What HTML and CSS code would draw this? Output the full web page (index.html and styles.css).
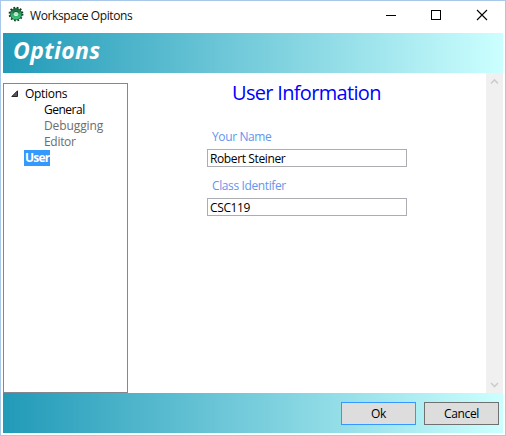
FILE: index.html
```html
<!DOCTYPE html>
<html lang="en">
<head>
<meta charset="utf-8">
<title>Workspace Opitons</title>
<link rel="stylesheet" href="styles.css">
</head>
<body>
<div class="window">
  <div class="titlebar">
    <svg class="gear" width="16" height="16" viewBox="0 0 16 16">
      <defs><linearGradient id="g" x1="0" y1="0" x2="0" y2="1"><stop offset="0" stop-color="#176b3d"/><stop offset=".5" stop-color="#2fa766"/><stop offset="1" stop-color="#36c478"/></linearGradient></defs>
      <circle cx="8" cy="8" r="6.5" fill="none" stroke="#153d27" stroke-width="1.8" stroke-dasharray="1.7 1.7"/>
      <ellipse cx="8" cy="8" rx="4.2" ry="3.9" fill="none" stroke="url(#g)" stroke-width="3.6"/>
      <circle cx="8" cy="8" r="5.8" fill="none" stroke="#174b2e" stroke-width=".7"/>
      <ellipse cx="8" cy="7.5" rx="2.4" ry="1.8" fill="#b5e3c6"/>
      <path d="M5.4 7.5a2.6 2.1 0 0 1 5.2 0" fill="none" stroke="#145331" stroke-width=".8"/>
    </svg>
    <span class="caption">Workspace Opitons</span>
    <div class="controls">
      <svg width="46" height="30" viewBox="0 0 46 30" shape-rendering="crispEdges"><path d="M18 14.5h10" stroke="#000"/></svg>
      <svg width="46" height="30" viewBox="0 0 46 30" shape-rendering="crispEdges"><path d="M17.5 9.5h9v9h-9z" fill="none" stroke="#000"/></svg>
      <svg width="46" height="30" viewBox="0 0 46 30"><path d="M17 9l10 10M27 9l-10 10" stroke="#000" stroke-width="1.1"/></svg>
    </div>
  </div>
  <div class="banner"><span>Options</span></div>
  <div class="content">
    <div class="tree">
      <div class="row root"><svg width="8" height="8" viewBox="0 0 8 8"><path d="M6.5 .8v5.7H.8z" fill="#595959" stroke="#262626"/></svg><span>Options</span></div>
      <div class="row child general"><span>General</span></div>
      <div class="row child disabled debugging"><span>Debugging</span></div>
      <div class="row child disabled"><span>Editor</span></div>
      <div class="row top"><span class="selected">User</span></div>
    </div>
    <div class="page">
      <h1><span>User Information</span></h1>
      <div class="form">
        <label>Your Name</label>
        <div class="field"><span>Robert Steiner</span></div>
        <label>Class Identifer</label>
        <div class="field"><span>CSC119</span></div>
      </div>
    </div>
    <div class="scrollbar">
      <svg width="17" height="17" viewBox="0 0 17 17"><path d="M5 10.5l3.5-3.5 3.5 3.5" fill="none" stroke="#cdcdcd" stroke-width="1.6"/></svg>
      <svg width="17" height="17" viewBox="0 0 17 17"><path d="M5 7l3.5 3.5 3.5-3.5" fill="none" stroke="#cdcdcd" stroke-width="1.6"/></svg>
    </div>
  </div>
  <div class="footer">
    <button class="default">Ok</button>
    <button>Cancel</button>
  </div>
</div>
</body>
</html>
```
FILE: styles.css
```css
* { box-sizing: border-box; }
body { margin: 0; font: 12px/16px "Open Sans", "Noto Sans", sans-serif; color: #000; letter-spacing: -.3px; }
span { white-space: nowrap; }
.window { width: 506px; height: 436px; border: 1px solid #a9c7e8; background: #fff; padding: 0 2px 2px; display: flex; flex-direction: column; }
.titlebar { height: 32px; display: flex; align-items: flex-start; flex: none; }
.gear { margin: 5px 6px 0 5px; flex: none; }
.caption { margin-top: 7px; letter-spacing: -.4px; color: #111; }
.controls { display: flex; margin: 0 -3px 0 auto; }
.banner, .footer { height: 40px; flex: none; background: linear-gradient(90deg, #219ab8, #ccffff); }
.banner { padding: 1px 0 0 10px; color: #fff; font-size: 23px; line-height: 32px; font-weight: 700; font-style: italic; letter-spacing: .35px; }
.content { height: 320px; display: flex; flex: none; }
.tree { width: 125px; margin-top: 10px; border: 1px solid #828790; padding-top: 2px; }
.row { height: 16px; display: flex; }
.root svg { margin: 4px 6px 0 7px; }
.child { padding-left: 40px; }
.general { letter-spacing: -.5px; }
.debugging { letter-spacing: -.1px; }
.disabled { color: #6d6d6d; }
.top { padding-left: 20px; }
.selected { background: #3399ff; color: #fff; font-weight: 700; padding: 0 1px; letter-spacing: -.8px; }
.page { flex: 1; }
h1 { margin: 6px 0 0 104px; font-size: 20px; line-height: 28px; font-weight: 400; color: #0000ff; letter-spacing: -.68px; }
.form { margin: 22px 0 0 79px; width: 200px; }
label { display: block; height: 20px; padding-left: 5px; color: #6495ed; letter-spacing: -.38px; }
.field { height: 18px; border: 1px solid #abadb3; padding-left: 2px; margin-bottom: 11px; line-height: 17px; letter-spacing: -.38px; }
.scrollbar { width: 17px; background: #f0f0f0; display: flex; flex-direction: column; justify-content: space-between; }
.footer { display: flex; justify-content: flex-end; gap: 8px; padding: 9px 4px 0 0; }
button { width: 75px; height: 23px; padding: 0; border: 1px solid #707070; background: #ddd; font: inherit; color: #000; letter-spacing: -.35px; }
.default { border-color: #3399ff; }
```
